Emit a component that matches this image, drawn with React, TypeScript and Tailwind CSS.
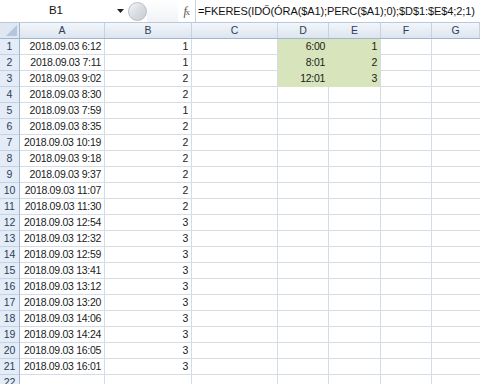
import React from 'react';

const rows: [string, number][] = [
  ['2018.09.03 6:12', 1],
  ['2018.09.03 7:11', 1],
  ['2018.09.03 9:02', 2],
  ['2018.09.03 8:30', 2],
  ['2018.09.03 7:59', 1],
  ['2018.09.03 8:35', 2],
  ['2018.09.03 10:19', 2],
  ['2018.09.03 9:18', 2],
  ['2018.09.03 9:37', 2],
  ['2018.09.03 11:07', 2],
  ['2018.09.03 11:30', 2],
  ['2018.09.03 12:54', 3],
  ['2018.09.03 12:32', 3],
  ['2018.09.03 12:59', 3],
  ['2018.09.03 13:41', 3],
  ['2018.09.03 13:12', 3],
  ['2018.09.03 13:20', 3],
  ['2018.09.03 14:06', 3],
  ['2018.09.03 14:24', 3],
  ['2018.09.03 16:05', 3],
  ['2018.09.03 16:01', 3],
  ['', 0],
];

// lookup table in D1:E3
const lookup: Record<number, [string, string]> = {
  0: ['6:00', '1'],
  1: ['8:01', '2'],
  2: ['12:01', '3'],
};

const cols = ['A', 'B', 'C', 'D', 'E', 'F', 'G'];
const grid = 'grid grid-cols-[20px_85px_87px_86px_51px_52px_51px_1fr]';
const cell = 'h-4 border-r border-b border-[#d6dce6] px-[3px] text-right leading-[15px] whitespace-nowrap overflow-hidden';

export default function App() {
  return (
    <div className="w-[480px] h-[384px] overflow-hidden bg-white text-[#1a1a1a] font-['Liberation_Sans',sans-serif] text-[10.5px] tracking-[-0.3px]">
      {/* FORMULA BAR */}
      <div className="flex h-[23px] items-center bg-white border-b border-[#b9c9da]">
        <div className="w-[112px] h-full flex items-center justify-center text-[11.5px] tracking-normal text-[#111]">
          B1
        </div>
        <div className="w-[16px] flex justify-center">
          <svg width="7" height="4" viewBox="0 0 7 4">
            <path d="M0 0h7L3.5 4z" fill="#222" />
          </svg>
        </div>
        <div className="w-[19px] h-[19px] rounded-full bg-gradient-to-br from-[#f4f5f7] via-[#d9dde3] to-[#c6ccd4] border border-[#b8bec8]" />
        <div className="w-[31px] h-full bg-gradient-to-b from-white to-[#f1f3f6]" />
        <div className="w-[17px] h-full flex items-center justify-center font-['Liberation_Serif',serif] italic text-[12px] text-[#555]">
          f<span className="text-[9px] not-italic -ml-[1px] mt-[3px]">x</span>
        </div>
        <div className="flex-1 h-full flex items-center pl-[2px] border-l border-[#c9d3df] text-[11px] tracking-[-0.1px] text-[#111] whitespace-nowrap overflow-hidden">
          =FKERES(IDŐ(ÓRA($A1);PERC($A1);0);$D$1:$E$4;2;1)
        </div>
      </div>

      {/* COLUMN HEADERS */}
      <div className={`${grid} h-[16px] bg-gradient-to-b from-[#f3f6fa] to-[#dde5f0] border-b border-[#9eb6ce]`}>
        <div className="relative border-r border-[#9eb6ce] bg-[#dfe7f2]">
          <svg className="absolute right-[2px] bottom-[2px]" width="11" height="11" viewBox="0 0 11 11">
            <path d="M11 0V11H0z" fill="#b4c6dc" />
          </svg>
        </div>
        {cols.map(c => (
          <div key={c} className="border-r border-[#c5d2e2] text-center leading-[15px] text-[#2c3e58] tracking-normal">
            {c}
          </div>
        ))}
      </div>

      {/* ROWS */}
      {rows.map(([a, b], i) => {
        const lk = lookup[i];
        return (
          <div key={i} className={grid}>
            <div className="h-4 bg-[#e4ecf7] border-r border-[#9eb6ce] border-b border-b-[#c5d2e2] text-center leading-[15px] text-[#2c3e58] tracking-normal">
              {i + 1}
            </div>
            <div className={cell}>{a}</div>
            <div className={cell}>{b || ''}</div>
            <div className={cell} />
            <div className={`${cell} ${lk ? 'bg-[#d8e4bc] border-[#d8e4bc]' : ''}`}>{lk?.[0]}</div>
            <div className={`${cell} ${lk ? 'bg-[#d8e4bc] border-b-[#d8e4bc]' : ''}`}>{lk?.[1]}</div>
            <div className={cell} />
            <div className="h-4 border-b border-[#d6dce6]" />
          </div>
        );
      })}
    </div>
  );
}
